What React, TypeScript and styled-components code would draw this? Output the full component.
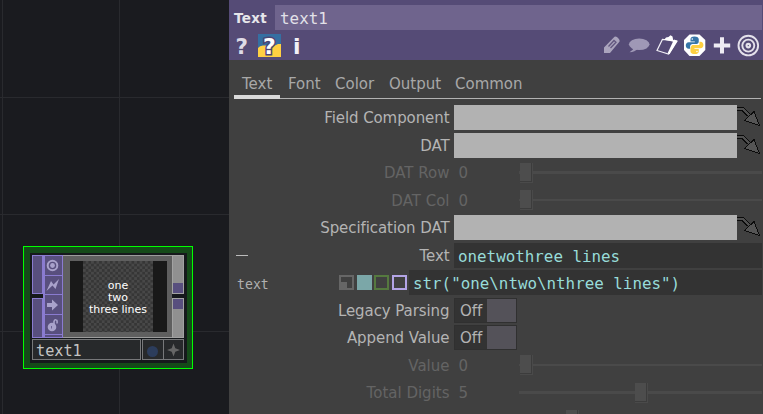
import React from 'react';
import styled, { createGlobalStyle, css } from 'styled-components';

const Global = createGlobalStyle`
  body { margin: 0; background: #1a1b1f; overflow: hidden; }
  * { box-sizing: border-box; }
`;

const sans = `"DejaVu Sans", Verdana, sans-serif`;
const mono = `"DejaVu Sans Mono", monospace`;

const Workspace = styled.div`
  display: flex;
  width: 763px;
  height: 414px;
  overflow: hidden;
  font-family: ${sans};
  font-size: 15px;
  font-variant-ligatures: none;
`;

/* ---------- Network canvas ---------- */
const Network = styled.div`
  position: relative;
  width: 229px;
  height: 414px;
  background:
    linear-gradient(#292a2e, #292a2e) 2px 0 / 1px 100% no-repeat,
    linear-gradient(#292a2e, #292a2e) 119px 0 / 1px 100% no-repeat,
    linear-gradient(#292a2e, #292a2e) 0 97px / 100% 1px no-repeat,
    linear-gradient(#292a2e, #292a2e) 0 214px / 100% 1px no-repeat,
    linear-gradient(#292a2e, #292a2e) 0 331px / 100% 1px no-repeat,
    #1a1b1f;
`;
const Node = styled.div`
  position: absolute;
  left: 23px;
  top: 246px;
  width: 170px;
  height: 123px;
  padding: 6px;
  border: 1px solid #00ff00;
  background: #154a19;
`;
const NodeInner = styled.div`
  height: 110px;
  width: 157px;
  padding: 2px 3px 3px 2px;
  background: #16191c;
  display: flex;
  flex-direction: column;
  gap: 1px;
`;
const NodeTop = styled.div`
  display: flex;
  height: 83px;
`;
const Ports = styled.div<{ $w: number }>`
  display: flex;
  flex-direction: column;
  gap: 4px;
  width: ${p => p.$w}px;
`;
const InPort = styled.div<{ $h: number }>`
  height: ${p => p.$h}px;
  border: 1px solid #8a7bd0;
  background: #584f7e;
`;
const OutPort = styled.div<{ $h: number; $end?: boolean }>`
  display: flex;
  align-items: ${p => (p.$end ? 'flex-end' : 'flex-start')};
  height: ${p => p.$h}px;
  border: 1px solid #a2a2a2;
  background: #909090;
`;
const PortTag = styled.div`
  width: 10px;
  height: 10px;
  background: #584f7e;
`;
const Flags = styled.div`
  display: flex;
  flex-direction: column;
  width: 20px;
  background: #584f7e;
  border: 1px solid #8a7bd0;
  border-left-width: 2px;
`;
const Flag = styled.div<{ $h: number }>`
  height: ${p => p.$h}px;
  border-bottom: 1px solid #8a7bd0;
  svg { display: block; }
`;
const Body = styled.div`
  flex: 1;
  padding: 5px 5px 5px 7px;
  border: solid #9c9c9c;
  border-width: 1px 0;
  background: #5f5f5f;
`;
const Viewer = styled.div`
  width: 97px;
  height: 71px;
  background: #191919;
  padding: 0 14px 0 13px;
`;
const Checker = styled.div`
  height: 71px;
  width: 70px;
  display: flex;
  flex-direction: column;
  align-items: center;
  padding-top: 19px;
  background: repeating-conic-gradient(#484848 0 25%, #363636 0 50%) 0 0 / 5.4px 5.4px;
  color: #fff;
  font-size: 11px;
  line-height: 11.8px;
  white-space: nowrap;
`;
const NodeFoot = styled.div`
  display: flex;
  gap: 1px;
  height: 21px;
`;
const NodeName = styled.div`
  width: 109px;
  padding-left: 3px;
  border: 1px solid #77787a;
  background: #27292b;
  color: #c4c4c4;
  font: 15.2px/22px ${mono};
`;
const FootButtons = styled.div`
  display: flex;
  width: 42px;
  border: 1px solid #77787a;
  background: #27292b;
`;
const FootButton = styled.div<{ $divided?: boolean }>`
  display: flex;
  align-items: center;
  justify-content: center;
  width: ${p => (p.$divided ? 21 : 19)}px;
  border-right: ${p => (p.$divided ? '1px solid #77787a' : '0')};
`;
const Dot = styled.div`
  width: 11px;
  height: 11px;
  margin: 3px 1px 0 0;
  border-radius: 50%;
  background: #2c3d5c;
`;

/* ---------- Parameter panel ---------- */
const Panel = styled.div`
  display: flex;
  flex-direction: column;
  width: 534px;
  height: 414px;
  background: #404040;
`;
const Header = styled.div`
  height: 60px;
  padding: 5px 1px 0 5px;
  background: #554b76;
`;
const TitleRow = styled.div`
  display: flex;
  height: 25px;
`;
const OpType = styled.div`
  width: 41px;
  color: #e6e6ea;
  font-weight: bold;
  font-size: 13.5px;
  letter-spacing: 0.3px;
  line-height: 27px;
`;
const OpName = styled.div`
  flex: 1;
  padding-left: 5px;
  background: #6f648d;
  color: #e2e0e8;
  font: 15.9px/27px ${mono};
`;
const IconBar = styled.div`
  display: flex;
  justify-content: space-between;
  height: 30px;
  svg { display: block; }
`;
const Tabs = styled.div`
  display: flex;
  align-items: flex-end;
  width: 527px;
  height: 25px;
  margin: 14px 0 0 5px;
  border-bottom: 1px solid #b2b2b2;
`;
const Tab = styled.div<{ $w: number; $active?: boolean }>`
  position: relative;
  width: ${p => p.$w}px;
  height: 25px;
  padding-left: 8px;
  color: #a8a8a8;
  line-height: 22px;
  ${p => p.$active && css`
    &::after {
      content: '';
      position: absolute;
      left: 0;
      bottom: -1px;
      width: 46px;
      height: 4px;
      background: #dadada;
    }
  `}
`;
const Params = styled.div`
  display: flex;
  flex-direction: column;
  padding: 5px 0 0 5px;
`;
const Row = styled.div`
  display: flex;
  flex: none;
  height: 27.5px;
`;
const Label = styled.div<{ $dim?: boolean }>`
  width: 215.5px;
  flex: none;
  text-align: right;
  line-height: 29px;
  letter-spacing: ${p => (p.$dim ? 0 : -0.08)}px;
  color: ${p => (p.$dim ? '#646464' : '#b4b4b4')};
`;
const RefField = styled.div`
  width: 283px;
  height: 25px;
  margin: 1px 0 0 4.5px;
  background: #b2b2b2;
`;
const Num = styled.div`
  width: 69.5px;
  flex: none;
  padding-left: 9px;
  color: #646464;
  line-height: 29px;
`;
const Track = styled.div<{ $thin?: boolean }>`
  position: relative;
  flex: none;
  width: 243px;
  height: ${p => (p.$thin ? 2 : 3)}px;
  margin-top: ${p => (p.$thin ? 12.5 : 12)}px;
  background: #4a4a4a;
`;
const Thumb = styled.div<{ $x: number; $y: number }>`
  position: absolute;
  left: ${p => p.$x}px;
  top: ${p => p.$y}px;
  width: 13px;
  height: 20px;
  background: #4d4d4d;
  box-shadow: inset -1px -1px #4a4a4a, inset -2px -2px #3c3c3c;
`;
const Code = styled.div<{ $ml: number }>`
  flex: 1;
  height: 25px;
  margin: 1px 1px 0 ${p => p.$ml}px;
  padding-left: 4px;
  background: #333;
  color: #98dcd9;
  font: 15.85px/27px ${mono};
  white-space: pre;
`;
const Expander = styled.div`
  width: 12px;
  height: 1px;
  margin: 13px -14px 0 2px;
  background: #bcbcbc;
`;
const ParName = styled.div`
  width: 105px;
  padding-left: 3px;
  color: #b0b0b0;
  font: 13.2px/31px ${mono};
`;
const Modes = styled.div`
  display: flex;
  gap: 2.6px;
  padding-top: 6px;
  width: 70px;
`;
const Mode = styled.div<{ $c: string; $fill?: boolean; $corner?: boolean }>`
  width: 15px;
  height: 15px;
  border: 2px solid ${p => p.$c};
  background: ${p => (p.$fill ? p.$c : '#404040')};
  ${p => p.$corner && css`
    background: linear-gradient(#666, #666) 0 100% / 6px 6px no-repeat, #404040;
  `}
`;
const Toggle = styled.div`
  display: flex;
  width: 63px;
  height: 25px;
  margin: 1px 0 0 4.5px;
  border: 1px solid #303030;
  background: #545259;
`;
const ToggleText = styled.div`
  width: 32px;
  padding-left: 5px;
  background: #333;
  color: #b4b4b4;
  line-height: 25px;
`;

const Pointer = () => (
  <svg width="26" height="27" viewBox="0 0 26 27" shapeRendering="crispEdges">
    <path d="M0 5H6L13 12" fill="none" stroke="#505050" strokeWidth="2.500" />
    <path d="M0 3.500H6.500L13 10M0 6.500H5L10.500 12" fill="none" stroke="#0b0b0b" />
    <path d="M17 7.500L22.500 21.500L7.500 16.500Z" fill="#555" stroke="#0b0b0b" />
  </svg>
);

const RefRow = ({ label }: { label: string }) => (
  <Row><Label>{label}</Label><RefField /><Pointer /></Row>
);
const SliderRow = ({ label, value, x, thin }: { label: string; value: string; x: number; thin?: boolean }) => (
  <Row><Label $dim>{label}</Label><Num>{value}</Num><Track $thin={thin}><Thumb $x={x} $y={thin ? -9 : -8} /></Track></Row>
);
const ToggleRow = ({ label }: { label: string }) => (
  <Row><Label>{label}</Label><Toggle><ToggleText>Off</ToggleText></Toggle></Row>
);

const HelpIcons = () => (
  <svg width="80" height="30" viewBox="0 0 80 30" fontFamily="DejaVu Sans" fontWeight="bold">
    <text x="1.500" y="23.500" fontSize="21.500" fill="#dedbe6">?</text>
    <rect x="24" y="4" width="23" height="23" fill="#356fa2" />
    <path d="M24 18Q26 15 30 15.500H40Q42 15 44 14H47V27H24Z" fill="#ffd042" />
    <text x="29" y="23.500" fontSize="22" fill="#fff" stroke="#4d4674" strokeWidth="3" paintOrder="stroke">?</text>
    <text x="59" y="23.500" fontSize="22" fill="#f2f0f6">i</text>
  </svg>
);

const ToolIcons = () => (
  <svg width="160" height="30" viewBox="0 0 160 30">
    <path d="M2 23V17.500L12.500 6.800Q14.500 6 16.500 8.500Q18 10 17.600 11.500L8 23Z" fill="#aaa4bd" />
    <path d="M6.500 16.500L12 10.500L14 12.200L8.500 18" fill="none" stroke="#62577f" strokeWidth="1.300" />
    <ellipse cx="37.200" cy="14.300" rx="10.300" ry="5.800" fill="#9f98b6" />
    <path d="M30 16L31 19.500L27.500 22.300Q33 22.300 36 18Z" fill="#9f98b6" />
    <path d="M60.500 9.300L55 20.500L66.500 24L74.500 11Z" fill="#554b76" stroke="#f2f0f6" strokeWidth="1.200" />
    <path d="M72 9.500L75.800 11L67.500 24.300L65.700 23Z M62.300 9.800L64 7.500L66.500 7L68.500 5.200L70.500 6.500L71.500 11.700L68 11Z" fill="#fff" />
    <path d="M87.500 4.600H97.500L103.300 10V20L97.500 26H87.500L82 20V10Z" fill="#fff" />
    <g transform="translate(83.800 6.400) scale(.72)">
      <path d="M12 0C8 0 6.500 1.600 6.500 4V7H12.500V8H4C1.500 8 0 10 0 12.500S1.500 17 4 17H6V14C6 12 7.500 10.500 9.500 10.500H15C16.800 10.500 18 9 18 7.200V4C18 1.500 16 0 12 0Z" fill="#3776a8" />
      <path d="M12.400 24.500C16.400 24.500 18 22.900 18 20.500V17.500H12V16.500H20.500C23 16.500 24.500 14.500 24.500 12S23 7.500 20.500 7.500H19V10.500C19 12.500 17.400 12 15.500 12H9.500C7.700 12 6.500 15.500 6.500 17.300V20.500C6.500 23 8.500 24.500 12.400 24.500Z" fill="#ffd040" />
      <circle cx="9" cy="3.500" r="1.100" fill="#fff" /><circle cx="15.500" cy="21" r="1.100" fill="#fff" />
    </g>
    <path d="M120 7.200V23.600M111.800 15.400H128.200" stroke="#eeecf3" strokeWidth="4" />
    <g fill="none" stroke="#e4e1eb" strokeWidth="1.900">
      <circle cx="146.300" cy="15.600" r="9.800" /><circle cx="146.300" cy="15.600" r="6" />
    </g>
    <circle cx="146.300" cy="15.600" r="2.800" fill="#e4e1eb" /><circle cx="146.300" cy="15.600" r=".7" fill="#554b76" />
  </svg>
);

export default function App() {
  return (
    <>
      <Global />
      <Workspace>
        <Network>
          <Node>
            <NodeInner>
              <NodeTop>
                <Ports $w={11}><InPort $h={39} /><InPort $h={40} /></Ports>
                <Flags>
                  <Flag $h={20}><svg width="17" height="19"><circle cx="7.500" cy="9.500" r="4.800" fill="none" stroke="#a9a2cb" strokeWidth="2" /><circle cx="7.500" cy="9.500" r="2.400" fill="#a9a2cb" /></svg></Flag>
                  <Flag $h={19}><svg width="17" height="18"><path d="M1.500 15L6 5L8.500 8.500L14 3L10.500 13L7.500 9.500Z" fill="#a9a2cb" /></svg></Flag>
                  <Flag $h={20}><svg width="17" height="19"><path d="M2 8H7V4.500L13 10L7 15.500V12H2Z" fill="#a9a2cb" /></svg></Flag>
                  <Flag $h={20}><svg width="17" height="19"><circle cx="7" cy="12" r="4.300" fill="#a9a2cb" /><path d="M9 9V6.500Q9.500 4.500 11 4.800Q12.500 5 12 8.500" fill="none" stroke="#a9a2cb" strokeWidth="1.600" /><path d="M6.500 11V13.500" stroke="#6d6396" /></svg></Flag>
                </Flags>
                <Body>
                  <Viewer><Checker><span>one</span><span>two</span><span>three lines</span></Checker></Viewer>
                </Body>
                <Ports $w={12}>
                  <OutPort $h={39} $end><PortTag /></OutPort>
                  <OutPort $h={40}><PortTag /></OutPort>
                </Ports>
              </NodeTop>
              <NodeFoot>
                <NodeName>text1</NodeName>
                <FootButtons>
                  <FootButton $divided><Dot /></FootButton>
                  <FootButton><svg width="13" height="15"><path d="M6.500 1.500L8.300 6.200L13 8L8.300 9.800L6.500 14.500L4.700 9.800L0 8L4.700 6.200Z" fill="#666" /></svg></FootButton>
                </FootButtons>
              </NodeFoot>
            </NodeInner>
          </Node>
        </Network>
        <Panel>
          <Header>
            <TitleRow><OpType>Text</OpType><OpName>text1</OpName></TitleRow>
            <IconBar><HelpIcons /><ToolIcons /></IconBar>
          </Header>
          <Tabs>
            <Tab $w={46} $active>Text</Tab>
            <Tab $w={47}>Font</Tab>
            <Tab $w={54}>Color</Tab>
            <Tab $w={66}>Output</Tab>
            <Tab $w={90}>Common</Tab>
          </Tabs>
          <Params>
            <RefRow label="Field Component" />
            <RefRow label="DAT" />
            <SliderRow label="DAT Row" value="0" x={1} />
            <SliderRow label="DAT Col" value="0" x={1} thin />
            <RefRow label="Specification DAT" />
            <Row><Expander /><Label>Text</Label><Code $ml={4.5}>onetwothree lines</Code></Row>
            <Row>
              <ParName>text</ParName>
              <Modes><Mode $c="#666" $corner /><Mode $c="#7ba7a8" $fill /><Mode $c="#55793f" /><Mode $c="#b3a4e6" /></Modes>
              <Code $ml={0}>{'str("one\\ntwo\\nthree lines")'}</Code>
            </Row>
            <ToggleRow label="Legacy Parsing" />
            <ToggleRow label="Append Value" />
            <SliderRow label="Value" value="0" x={1} thin />
            <SliderRow label="Total Digits" value="5" x={116} />
            <SliderRow label="" value="" x={47} thin />
          </Params>
        </Panel>
      </Workspace>
    </>
  );
}
